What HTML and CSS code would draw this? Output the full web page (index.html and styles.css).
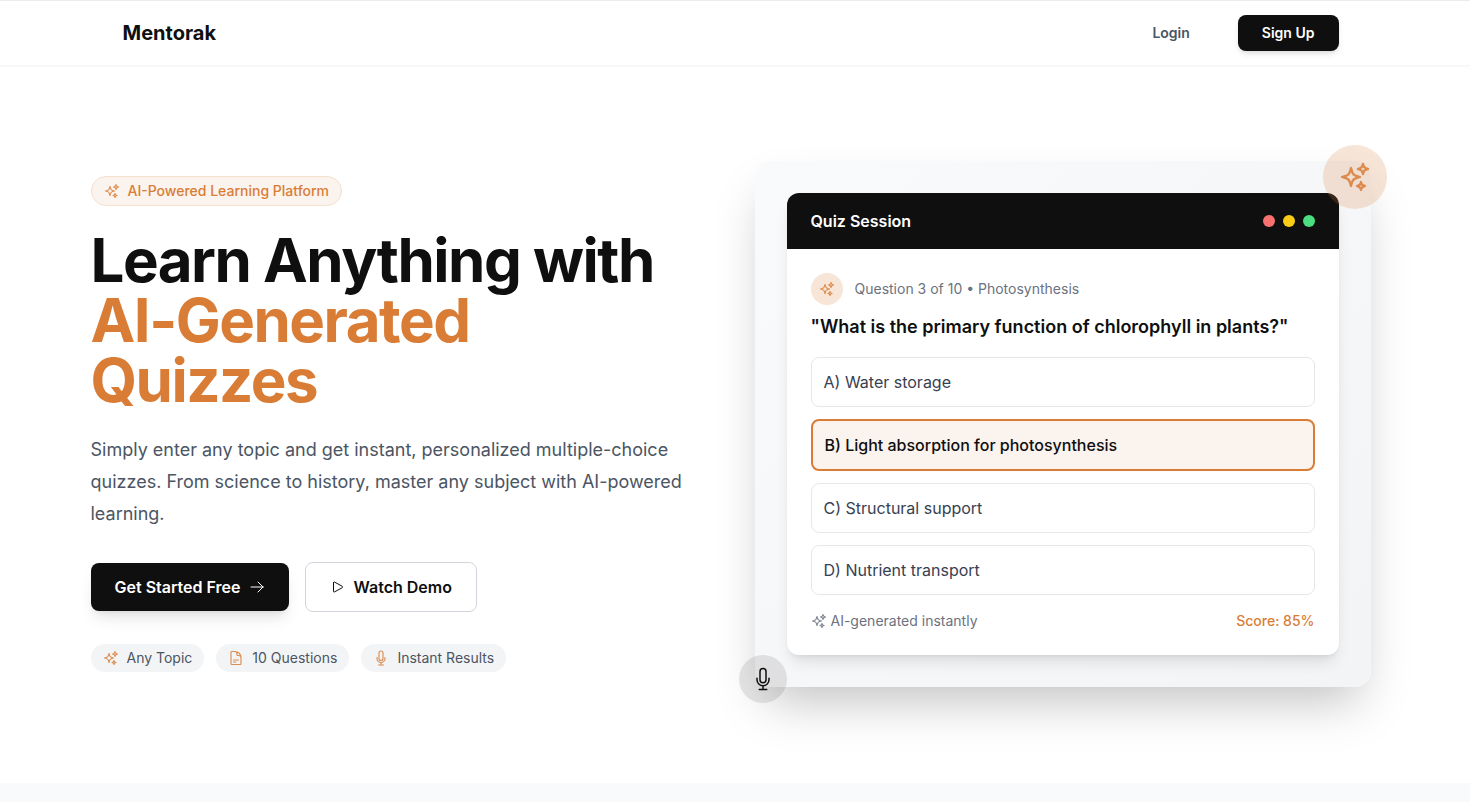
FILE: index.html
```html
<!DOCTYPE html>
<html lang="en">
<head>
<meta charset="utf-8">
<title>Mentorak</title>
<link rel="stylesheet" href="styles.css">
</head>
<body>
<svg class="defs" width="0" height="0" aria-hidden="true">
  <defs>
    <symbol id="i-sparkles" viewBox="0 0 24 24"><path d="M9.813 15.904L9 18.75l-.813-2.846a4.5 4.5 0 00-3.09-3.09L2.25 12l2.846-.813a4.5 4.5 0 003.09-3.09L9 5.25l.813 2.846a4.5 4.5 0 003.09 3.09L15.75 12l-2.846.813a4.5 4.5 0 00-3.09 3.09zM18.259 8.715L18 9.75l-.259-1.035a3.375 3.375 0 00-2.455-2.456L14.25 6l1.036-.259a3.375 3.375 0 002.455-2.456L18 2.25l.259 1.035a3.375 3.375 0 002.456 2.456L21.75 6l-1.035.259a3.375 3.375 0 00-2.456 2.456zM16.894 20.567L16.5 21.75l-.394-1.183a2.25 2.25 0 00-1.423-1.423L13.5 18.75l1.183-.394a2.25 2.25 0 001.423-1.423l.394-1.183.394 1.183a2.25 2.25 0 001.423 1.423l1.183.394-1.183.394a2.25 2.25 0 00-1.423 1.423z"/></symbol>
    <symbol id="i-doc" viewBox="0 0 24 24"><path d="M19.5 14.25v-2.625a3.375 3.375 0 00-3.375-3.375h-1.5A1.125 1.125 0 0113.5 7.125v-1.5a3.375 3.375 0 00-3.375-3.375H8.25m0 12.75h7.5m-7.5 3H12M10.5 2.25H5.625c-.621 0-1.125.504-1.125 1.125v17.25c0 .621.504 1.125 1.125 1.125h12.75c.621 0 1.125-.504 1.125-1.125V11.25a9 9 0 00-9-9z"/></symbol>
    <symbol id="i-mic" viewBox="0 0 24 24"><path d="M12 18.75a6 6 0 006-6v-1.5m-6 7.5a6 6 0 01-6-6v-1.5m6 7.5v3.75m-3.75 0h7.5M12 15.75a3 3 0 01-3-3V4.5a3 3 0 116 0v8.25a3 3 0 01-3 3z"/></symbol>
    <symbol id="i-play" viewBox="0 0 24 24"><path d="M5.25 5.653c0-.856.917-1.398 1.667-.986l11.54 6.348a1.125 1.125 0 010 1.971l-11.54 6.347a1.125 1.125 0 01-1.667-.985V5.653z"/></symbol>
    <symbol id="i-arrow" viewBox="0 0 24 24"><path d="M13.5 4.5L21 12m0 0l-7.5 7.5M21 12H3"/></symbol>
  </defs>
</svg>
<div class="page">
  <header class="nav">
    <div class="nav-inner">
      <span class="logo">Mentorak</span>
      <div class="nav-actions">
        <a class="login">Login</a>
        <a class="signup">Sign Up</a>
      </div>
    </div>
  </header>
  <main class="hero">
    <div class="hero-grid">
      <section class="copy">
        <span class="badge"><svg class="ic ic-16 bold"><use href="#i-sparkles"/></svg>AI-Powered Learning Platform</span>
        <h1>Learn Anything with <span class="accent">AI-Generated Quizzes</span></h1>
        <p class="lead">Simply enter any topic and get instant, personalized multiple-choice quizzes. From science to history, master any subject with AI-powered learning.</p>
        <div class="cta">
          <a class="btn btn-dark">Get Started Free<svg class="ic ic-16"><use href="#i-arrow"/></svg></a>
          <a class="btn btn-light"><svg class="ic ic-16"><use href="#i-play"/></svg>Watch Demo</a>
        </div>
        <div class="pills">
          <span class="pill"><svg class="ic ic-16 orange bold"><use href="#i-sparkles"/></svg>Any Topic</span>
          <span class="pill"><svg class="ic ic-16 orange bold"><use href="#i-doc"/></svg>10 Questions</span>
          <span class="pill"><svg class="ic ic-16 orange bold"><use href="#i-mic"/></svg>Instant Results</span>
        </div>
      </section>
      <section class="visual">
        <div class="panel">
          <div class="quiz">
            <div class="quiz-head">
              <span class="quiz-title">Quiz Session</span>
              <span class="dots"><i class="dot red"></i><i class="dot yellow"></i><i class="dot green"></i></span>
            </div>
            <div class="quiz-body">
              <div class="meta">
                <span class="meta-icon"><svg class="ic ic-16 orange bold"><use href="#i-sparkles"/></svg></span>
                <span>Question 3 of 10 • Photosynthesis</span>
              </div>
              <h2>"What is the primary function of chlorophyll in plants?"</h2>
              <div class="options">
                <div class="option">A) Water storage</div>
                <div class="option selected">B) Light absorption for photosynthesis</div>
                <div class="option">C) Structural support</div>
                <div class="option">D) Nutrient transport</div>
              </div>
              <div class="quiz-foot">
                <span class="foot-left"><svg class="ic ic-16 bold"><use href="#i-sparkles"/></svg>AI-generated instantly</span>
                <span class="score">Score: 85%</span>
              </div>
            </div>
          </div>
        </div>
        <span class="float float-top"><svg class="ic ic-32 bold"><use href="#i-sparkles"/></svg></span>
        <span class="float float-bottom"><svg class="ic ic-24"><use href="#i-mic"/></svg></span>
      </section>
    </div>
  </main>
  <div class="next"></div>
</div>
</body>
</html>
```
FILE: styles.css
```css
* { box-sizing: border-box; }
html, body { margin: 0; padding: 0; height: 802px; overflow: hidden; }
body { font-family: Inter, "Liberation Sans", sans-serif; color: #0f0f0f; background: #fff; }
.defs { position: absolute; }
.page { width: 1470px; }
.ic { display: block; flex: none; fill: none; stroke: currentColor; stroke-width: 1.5; stroke-linecap: round; stroke-linejoin: round; }
.bold { stroke-width: 1.75; opacity: .85; }
.ic-16 { width: 16px; height: 16px; }
.ic-24 { width: 24px; height: 24px; }
.ic-32 { width: 32px; height: 32px; }
.orange { color: #d97d36; }

.nav { height: 66px; padding-right: 9px; border-top: 1px solid #ececee; border-bottom: 1px solid #f5f5f6; box-shadow: 0 1px 2px rgba(0,0,0,.03); }
.nav-inner { width: 1216px; height: 64px; margin: 0 auto; display: flex; align-items: center; justify-content: space-between; }
.logo { font-size: 20px; font-weight: 700; line-height: 28px; color: #0f0f0f; }
.nav-actions { display: flex; align-items: center; gap: 24px; }
.login { font-size: 14px; font-weight: 600; line-height: 20px; padding: 8px 24px; color: #4b5563; }
.signup { font-size: 14px; font-weight: 600; line-height: 20px; padding: 8px 24px; color: #fff; background: #0f0f0f; border-radius: 8px; box-shadow: 0 4px 6px -1px rgba(0,0,0,.1), 0 2px 4px -2px rgba(0,0,0,.1); }

.hero { height: 717px; padding: 0 9px 1px 0; display: flex; align-items: center; }
.hero-grid { width: 1280px; margin: 0 auto; display: grid; grid-template-columns: 616px 616px; gap: 48px; align-items: center; }

.badge { display: inline-flex; align-items: center; gap: 8px; height: 30px; padding: 0 12px; border: 1px solid #f5dfcd; border-radius: 999px; background: #fbf3ed; color: #d97d36; font-size: 14px; line-height: 20px; font-weight: 500; }
h1 { margin: 24px 0 0; font-size: 60px; line-height: 60px; font-weight: 700; letter-spacing: -1.5px; color: #0f0f0f; }
.accent { display: block; color: #d97d36; }
.lead { margin: 24px 0 0; font-size: 18px; line-height: 32px; color: #4b5563; }
.cta { margin-top: 32px; display: flex; align-items: center; gap: 16px; }
.btn { display: inline-flex; align-items: center; border-radius: 8px; font-size: 16px; font-weight: 600; line-height: 24px; }
.btn-dark { gap: 8px; padding: 12px 24px; color: #fff; background: #0f0f0f; box-shadow: 0 10px 15px -3px rgba(0,0,0,.1), 0 4px 6px -4px rgba(0,0,0,.1); }
.btn-light { gap: 8px; padding: 12px 24px; color: #0f0f0f; background: #fff; border: 1px solid #d1d5db; }
.pills { margin-top: 32px; display: flex; gap: 12px; }
.pill { display: inline-flex; align-items: center; gap: 8px; height: 28px; padding: 0 12px; background: #f3f4f6; border-radius: 999px; font-size: 14px; line-height: 20px; color: #4b5563; }

.visual { position: relative; }
.panel { padding: 32px; background: linear-gradient(135deg, #f9fafb, #f3f4f6); border-radius: 16px; box-shadow: 0 25px 50px -12px rgba(0,0,0,.25); }
.quiz { background: #fff; border-radius: 12px; overflow: hidden; box-shadow: 0 10px 15px -3px rgba(0,0,0,.1), 0 4px 6px -4px rgba(0,0,0,.1); }
.quiz-head { height: 56px; padding: 0 24px; display: flex; align-items: center; justify-content: space-between; background: #0f0f0f; color: #fff; }
.quiz-title { font-size: 16px; font-weight: 600; line-height: 24px; }
.dots { display: flex; gap: 8px; }
.dot { display: block; width: 12px; height: 12px; border-radius: 50%; }
.red { background: #f87171; }
.yellow { background: #facc15; }
.green { background: #4ade80; }
.quiz-body { padding: 24px; }
.meta { display: flex; align-items: center; gap: 12px; font-size: 14px; line-height: 20px; color: #6b7280; }
.meta-icon { width: 32px; height: 32px; border-radius: 50%; background: #f7e5d7; display: flex; align-items: center; justify-content: center; }
h2 { margin: 8px 0 0; font-size: 18px; line-height: 28px; font-weight: 600; color: #0f0f0f; }
.options { margin-top: 16px; display: flex; flex-direction: column; gap: 12px; }
.option { height: 50px; padding: 0 12px; display: flex; align-items: center; border: 1px solid #e5e7eb; border-radius: 8px; font-size: 16px; color: #374151; }
.selected { height: 52px; border: 2px solid #d97d36; background: #fbf3ed; color: #0f0f0f; font-weight: 500; }
.quiz-foot { margin-top: 16px; display: flex; align-items: center; justify-content: space-between; font-size: 14px; line-height: 20px; }
.foot-left { display: flex; align-items: center; gap: 4px; color: #6b7280; }
.score { color: #d97d36; font-weight: 500; }
.float { position: absolute; display: flex; align-items: center; justify-content: center; border-radius: 50%; }
.float-top { top: -16px; right: -16px; width: 64px; height: 64px; background: rgba(217,125,54,.2); color: #d97d36; }
.float-bottom { bottom: -16px; left: -16px; width: 48px; height: 48px; background: rgba(15,15,15,.1); color: #0f0f0f; }
.next { height: 19px; background: #f9fafb; }
```
